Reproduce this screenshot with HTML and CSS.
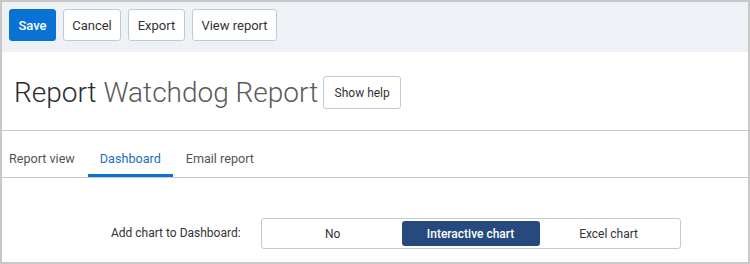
FILE: index.html
```html
<!DOCTYPE html>
<html>
<head>
<meta charset="utf-8">
<link rel="stylesheet" href="styles.css">
</head>
<body>
<div class="frame">
  <div class="toolbar">
    <button class="btn primary">Save</button>
    <button class="btn">Cancel</button>
    <button class="btn">Export</button>
    <button class="btn">View report</button>
  </div>
  <div class="header">
    <h1 class="title"><span class="dark">Report</span> <span class="light">Watchdog Report</span></h1>
    <button class="btn small">Show help</button>
  </div>
  <div class="tabs">
    <div class="tab">Report view</div>
    <div class="tab active">Dashboard</div>
    <div class="tab">Email report</div>
  </div>
  <div class="form">
    <label class="label">Add chart to Dashboard:</label>
    <div class="segmented">
      <div class="seg">No</div>
      <div class="seg on">Interactive chart</div>
      <div class="seg">Excel chart</div>
    </div>
  </div>
</div>
</body>
</html>
```
FILE: styles.css
```css
html, body { margin: 0; padding: 0; }
body { font-family: Roboto, "Liberation Sans", sans-serif; background: #fff; }
.frame {
  width: 750px; height: 264px; box-sizing: border-box;
  border: 2px solid #c8c8c8; overflow: hidden;
  display: flex; flex-direction: column;
}
.toolbar {
  background: #eef1f6; height: 50px; box-sizing: border-box;
  padding: 7px 7px; display: flex; gap: 7px; align-items: flex-start;
}
.btn {
  box-sizing: border-box; white-space: nowrap;
  font-family: inherit; font-size: 13px; color: #333;
  background: #fff; border: 1px solid #c5c9d1; border-radius: 3px;
  height: 32px; padding: 0; margin: 0; cursor: pointer;
}
.btn.primary { background: #0a72d2; border-color: #0a72d2; color: #fff; font-weight: 500; width: 47px; }
.toolbar .btn:nth-child(2) { width: 58px; }
.toolbar .btn:nth-child(3) { width: 57px; }
.toolbar .btn:nth-child(4) { width: 85px; }
.header {
  height: 79px; box-sizing: border-box; border-bottom: 1px solid #c5c9d1;
  display: flex; align-items: flex-start; padding: 24px 0 0 12px; gap: 5px;
}
.title { margin: 0; font-size: 28px; font-weight: 300; line-height: 34px; }
.title .dark { color: #2b2b2b; }
.title .light { color: #5a5a5a; }
.btn.small { font-size: 12px; width: 78px; height: 33px; }
.tabs {
  height: 47px; box-sizing: border-box; border-bottom: 1px solid #c5c9d1;
  display: flex; align-items: stretch;
}
.tab {
  font-size: 12.6px; color: #555; display: flex; align-items: center;
  padding-top: 12px; box-sizing: border-box; border-bottom: 3px solid transparent;
}
.tab:nth-child(1) { padding-left: 7px; padding-right: 13px; }
.tab:nth-child(2) { padding-left: 12px; padding-right: 12px; }
.tab:nth-child(3) { padding-left: 13px; }
.tab.active { color: #1b6fc2; border-bottom-color: #0a72d2; }
.form {
  flex: 1; display: flex; align-items: flex-start; padding: 40px 0 0 109px; gap: 20px;
}
.label { font-size: 12px; color: #333; line-height: 30px; }
.segmented {
  width: 420px; height: 31px; box-sizing: border-box; border: 1px solid #c5c9d1; border-radius: 3px;
  display: flex; padding: 2px;
}
.seg { flex: 1; display: flex; align-items: center; justify-content: center; font-size: 12px; color: #333; border-radius: 3px; }
.seg.on { background: #264a7e; color: #fff; font-weight: 500; flex: 0 0 138px; }
```
